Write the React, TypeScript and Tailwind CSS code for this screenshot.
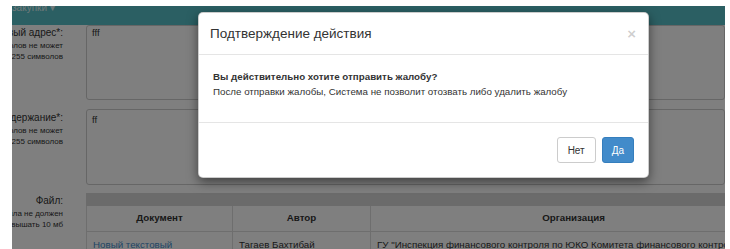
import React from "react";

const font = { fontFamily: '"Liberation Sans", Arial, sans-serif' };

function Label({ main, subs }: { main: string; subs: string[] }) {
  return (
    <div className="w-[74px] shrink-0 pr-[23px] flex flex-col items-end whitespace-nowrap text-[#333]">
      <div className="text-[10px] leading-[15px]">{main}</div>
      {subs.map((s) => (
        <div key={s} className="text-[8px] leading-[11px]">
          {s}
        </div>
      ))}
    </div>
  );
}

export default function App() {
  return (
    <div className="w-[730px] h-[249px] bg-white pl-[12px] pt-[6px] overflow-hidden" style={font}>
      <div className="relative w-[713px] h-[243px] overflow-hidden bg-white">
        {/* navbar */}
        <div className="h-[19px] bg-[#56bec6] overflow-hidden">
          <div className="mt-[-6px] text-[10px] leading-[15px] text-white/80">закупки ▾</div>
        </div>

        {/* form rows */}
        <div className="flex">
          <Label main="Почтовый адрес*:" subs={["Количество символов не может", "превышать 255 символов"]} />
          <div className="w-[700px] h-[75px] border border-[#ccc] rounded-[3px] pl-[5px] text-[9.5px] leading-[14px] text-[#333]">
            fff
          </div>
        </div>
        <div className="flex mt-[9px]">
          <div className="pt-[1px]">
            <Label main="Содержание*:" subs={["Количество символов не может", "превышать 255 символов"]} />
          </div>
          <div className="w-[700px] h-[76px] border border-[#ccc] rounded-[3px] pl-[5px] pt-[2px] text-[9.5px] leading-[15px] text-[#333]">
            ff
          </div>
        </div>
        <div className="flex mt-[8px]">
          <Label main="Файл:" subs={["Размер файла не должен", "превышать 10 мб"]} />
          <div className="w-[690px] shrink-0 text-[9.75px] text-[#333]">
            <div className="h-[13px] bg-[#d6d6d6]" />
            <div className="grid grid-cols-[146px_138px_406px] border-l border-[#ddd]">
              <div className="h-[26px] border-r border-b border-[#ddd] flex items-center justify-center font-bold">Документ</div>
              <div className="h-[26px] border-r border-b border-[#ddd] flex items-center justify-center font-bold">Автор</div>
              <div className="h-[26px] border-r border-b border-[#ddd] flex items-center justify-center font-bold">Организация</div>
              <div className="border-r border-[#ddd] px-[6px] pt-[5px] leading-[15px] text-[#428bca] whitespace-nowrap">Новый текстовый</div>
              <div className="border-r border-[#ddd] px-[6px] pt-[5px] leading-[15px] whitespace-nowrap">Тагаев Бахтибай</div>
              <div className="border-r border-[#ddd] px-[6px] pt-[5px] leading-[15px] whitespace-nowrap overflow-hidden">
                ГУ "Инспекция финансового контроля по ЮКО Комитета финансового контроля
              </div>
            </div>
          </div>
        </div>

        {/* backdrop */}
        <div className="absolute inset-0 bg-black/50" />

        {/* modal */}
        <div className="absolute left-[186px] top-[6px] w-[451px] bg-white rounded-[5px] border border-black/20 shadow-[0_4px_11px_rgba(0,0,0,0.5)] text-[#333]">
          <div className="flex items-center justify-between pl-[11px] pr-[12px] py-[11px] border-b border-[#e5e5e5]">
            <div className="text-[13.5px] leading-[19px]">Подтверждение действия</div>
            <div className="text-[15px] leading-[15px] font-bold text-black/20">×</div>
          </div>
          <div className="pl-[14px] pt-[14px] pb-[23px] text-[9.75px] leading-[15px]">
            <div className="font-bold">Вы действительно хотите отправить жалобу?</div>
            <div>После отправки жалобы, Система не позволит отозвать либо удалить жалобу</div>
          </div>
          <div className="flex justify-end gap-[6px] border-t border-[#e5e5e5] pt-[14px] pb-[14px] pr-[14px]">
            <button className="h-[26px] px-[10px] border border-[#ccc] rounded-[3px] bg-white text-[10px] text-[#333]">Нет</button>
            <button className="h-[26px] px-[9px] border border-[#357ebd] rounded-[3px] bg-[#428bca] text-[10px] text-white">Да</button>
          </div>
        </div>
      </div>
    </div>
  );
}
